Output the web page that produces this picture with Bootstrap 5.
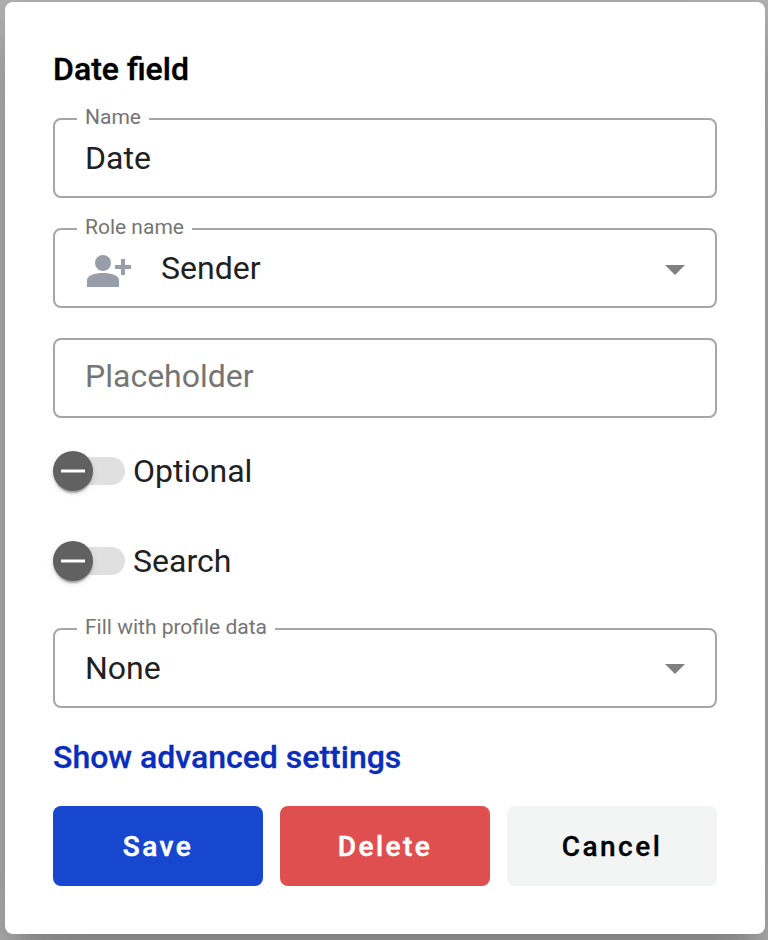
<!DOCTYPE html>
<html lang="en">
<head>
<meta charset="utf-8">
<meta name="viewport" content="width=device-width, initial-scale=1">
<title>Date field</title>
<link href="https://cdn.jsdelivr.net/npm/bootstrap@5.3.0/dist/css/bootstrap.min.css" rel="stylesheet">
<style>
body{background:#b4b4b4;font-family:Roboto,"Liberation Sans",sans-serif;font-size:32px;line-height:40px;color:#212121;height:940px;overflow:hidden}
.dialog-panel{width:760px;height:932px;margin:2px 0 0 5px;padding:48px;border:0;border-radius:8px;background:#fff;color:#212121;box-shadow:0 22px 30px -14px rgba(0,0,0,.2),0 48px 76px 6px rgba(0,0,0,.1),0 18px 92px 16px rgba(0,0,0,.1)}
.dialog-heading{font-size:32px;line-height:38px;font-weight:500;color:#000;margin-bottom:30px;-webkit-text-stroke:.4px #000}
.outlined{height:80px;border:2px solid #a6a6a6;border-radius:8px;padding:0 30px;margin-bottom:30px}
.outlined label{top:-15px;left:22px;padding:0 8px;background:#fff;color:#757575;font-size:21px;line-height:24px;white-space:nowrap}
.hint{color:#757575;padding-bottom:4px}
.person{margin-right:28px}
.caret{margin-top:2px}
.caret-low{margin-top:4px}
.switch-row{height:40px;margin-bottom:50px}
.first-switch{margin-top:3px}
.last-switch{margin-bottom:47px}
.toggle{width:72px;height:28px;border-radius:14px;background:#e0e0e0;margin-right:8px}
.knob{width:40px;height:40px;border-radius:50%;background:#616161;box-shadow:0 4px 2px -2px rgba(0,0,0,.2),0 2px 2px rgba(0,0,0,.14),0 2px 6px rgba(0,0,0,.12)}
.advanced{color:#0a2ebb;font-weight:500;line-height:38px;margin-bottom:30px;-webkit-text-stroke:.3px #0a2ebb}
.actions{gap:17px}
.actions .btn{width:210px;height:80px;border:0;border-radius:8px;font-size:28px;font-weight:500;letter-spacing:2.5px;padding:2px 0 0;-webkit-text-stroke:.5px currentColor}
.save,.save:hover{background:#1746cf;color:#fff}
.delete,.delete:hover{background:#df4f50;color:#fff}
.actions .cancel,.actions .cancel:hover{background:#f3f5f5;color:#000;-webkit-text-stroke-width:.3px}
</style>
<script src="https://cdn.jsdelivr.net/npm/bootstrap@5.3.0/dist/js/bootstrap.bundle.min.js"></script>
</head>
<body>
<main class="dialog-panel d-flex flex-column">
  <h1 class="dialog-heading">Date field</h1>
  <div class="outlined position-relative d-flex align-items-center flex-shrink-0">
    <label class="position-absolute">Name</label><span>Date</span>
  </div>
  <div class="outlined position-relative d-flex align-items-center flex-shrink-0">
    <label class="position-absolute">Role name</label>
    <svg width="48" height="40" viewBox="0 0 48 40" class="person flex-shrink-0" fill="#979eaa"><circle cx="18" cy="15" r="8"/><path d="M2 39v-7c0-4.600 8-7 16-7s16 2.400 16 7v7zM36 11h4v6h6v4h-6v6h-4v-6h-6v-4h6z"/></svg>
    <span class="flex-grow-1">Sender</span>
    <svg class="caret caret-low" width="20" height="10" viewBox="0 0 20 10" fill="#808080"><path d="M0 0h20L10 10z"/></svg>
  </div>
  <div class="outlined d-flex align-items-center flex-shrink-0 hint"><span>Placeholder</span></div>
  <div class="switch-row first-switch d-flex align-items-center">
    <span class="toggle d-flex align-items-center"><span class="knob d-flex align-items-center justify-content-center"><svg width="24" height="4"><path fill="#fff" d="M0 .5h24v3H0z"/></svg></span></span><span>Optional</span>
  </div>
  <div class="switch-row last-switch d-flex align-items-center">
    <span class="toggle d-flex align-items-center"><span class="knob d-flex align-items-center justify-content-center"><svg width="24" height="4"><path fill="#fff" d="M0 .5h24v3H0z"/></svg></span></span><span>Search</span>
  </div>
  <div class="outlined position-relative d-flex align-items-center justify-content-between flex-shrink-0">
    <label class="position-absolute">Fill with profile data</label><span>None</span>
    <svg class="caret" width="20" height="10" viewBox="0 0 20 10" fill="#808080"><path d="M0 0h20L10 10z"/></svg>
  </div>
  <a class="advanced text-decoration-none" href="#">Show advanced settings</a>
  <div class="actions d-flex">
    <button class="btn save" type="button">Save</button>
    <button class="btn delete" type="button">Delete</button>
    <button class="btn cancel" type="button">Cancel</button>
  </div>
</main>
</body>
</html>
